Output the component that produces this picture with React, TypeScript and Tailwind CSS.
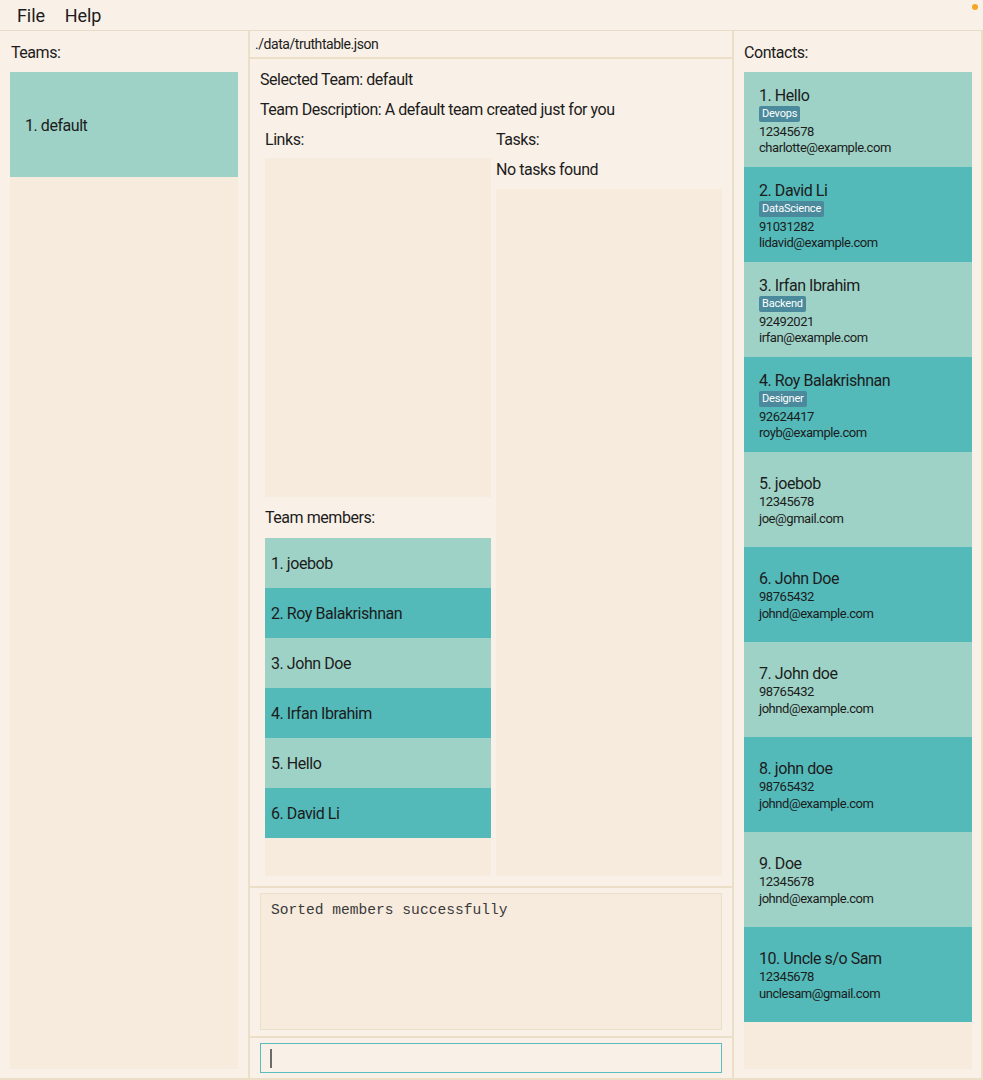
import React from "react";

const contacts = [
  { name: "1. Hello", tag: "Devops", phone: "12345678", email: "charlotte@example.com" },
  { name: "2. David Li", tag: "DataScience", phone: "91031282", email: "lidavid@example.com" },
  { name: "3. Irfan Ibrahim", tag: "Backend", phone: "92492021", email: "irfan@example.com" },
  { name: "4. Roy Balakrishnan", tag: "Designer", phone: "92624417", email: "royb@example.com" },
  { name: "5. joebob", tag: "", phone: "12345678", email: "joe@gmail.com" },
  { name: "6. John Doe", tag: "", phone: "98765432", email: "johnd@example.com" },
  { name: "7. John doe", tag: "", phone: "98765432", email: "johnd@example.com" },
  { name: "8. john doe", tag: "", phone: "98765432", email: "johnd@example.com" },
  { name: "9. Doe", tag: "", phone: "12345678", email: "johnd@example.com" },
  { name: "10. Uncle s/o Sam", tag: "", phone: "12345678", email: "unclesam@gmail.com" },
];

const members = [
  "1. joebob",
  "2. Roy Balakrishnan",
  "3. John Doe",
  "4. Irfan Ibrahim",
  "5. Hello",
  "6. David Li",
];

export default function App() {
  return (
    <div className="w-[983px] h-[1080px] bg-[#f9f0e7] flex flex-col text-[#1c1c1c] font-['Roboto',sans-serif] tracking-[-0.45px] overflow-hidden">
      {/* Menu bar */}
      <div className="relative h-[31px] shrink-0 border-b border-[#e8dcc6] flex items-center pl-[17px] gap-[20px] text-[18px] tracking-[-0.1px]">
        <span>File</span>
        <span>Help</span>
        <span className="absolute right-[5px] top-[4px] w-[6px] h-[6px] rounded-full bg-[#f5a623]" />
      </div>

      {/* Body */}
      <div className="flex-1 flex border-b-2 border-r-2 border-[#ebdfc8] min-h-0">
        {/* Left: Teams */}
        <div className="w-[248px] shrink-0 flex flex-col px-[10px] pb-[9px]">
          <div className="h-[41px] flex items-center pl-[1px] pt-[2px] text-[16px]">Teams:</div>
          <div className="flex-1 bg-[#f7ebde]">
            <div className="h-[105px] bg-[#9ed2c6] flex items-center pl-[15px] pt-[2px] text-[16px]">1. default</div>
          </div>
        </div>

        {/* Middle */}
        <div className="w-[486px] shrink-0 flex flex-col border-l-2 border-r-2 border-[#ebdfc8]">
          <div className="h-[28px] shrink-0 border-b-2 border-[#ebdfc8] flex items-center pl-[5px] text-[14px]">
            ./data/truthtable.json
          </div>

          <div className="flex-1 min-h-0 flex flex-col pt-[5px] pb-[10px] border-b-2 border-[#ebdfc8]">
            <div className="h-[30px] flex items-center pl-[10px] pt-[2px] text-[16px]">Selected Team: default</div>
            <div className="h-[30px] flex items-center pl-[10px] pt-[2px] text-[16px]">
              Team Description: A default team created just for you
            </div>
            <div className="flex-1 min-h-0 flex gap-[5px] pl-[15px] pr-[10px]">
              {/* Links + members */}
              <div className="w-[226px] flex flex-col">
                <div className="h-[34px] flex items-center pb-[2px] text-[16px]">Links:</div>
                <div className="h-[339px] bg-[#f7ebde]" />
                <div className="h-[41px] flex items-center pt-[1px] text-[16px]">Team members:</div>
                <div className="flex-1 bg-[#f7ebde]">
                  {members.map((m, i) => (
                    <div
                      key={m}
                      className={`h-[50px] flex items-center pl-[6px] pt-[2px] text-[16px] ${
                        i % 2 === 0 ? "bg-[#9ed2c6]" : "bg-[#53b9b9]"
                      }`}
                    >
                      {m}
                    </div>
                  ))}
                </div>
              </div>
              {/* Tasks */}
              <div className="w-[226px] flex flex-col">
                <div className="h-[30px] flex items-center pt-[2px] text-[16px]">Tasks:</div>
                <div className="h-[30px] flex items-center pt-[2px] text-[16px]">No tasks found</div>
                <div className="flex-1 mt-[5px] bg-[#f7ebde]" />
              </div>
            </div>
          </div>

          {/* Result display */}
          <div className="h-[150px] shrink-0 border-b-2 border-[#ebdfc8] px-[10px] pt-[5px] pb-[6px] flex">
            <div className="flex-1 bg-[#f7ebde] border border-[#ebdfc8] pl-[10px] pt-[6px] text-[14.6px] tracking-normal font-['Liberation_Mono',monospace] text-[#3a3a3a]">
              Sorted members successfully
            </div>
          </div>

          {/* Command box */}
          <div className="h-[40px] shrink-0 px-[10px] py-[5px] flex">
            <div className="flex-1 border border-[#5bbcbc] bg-[#f9f0e7] flex items-center pl-[9px]">
              <div className="w-[2px] h-[19px] bg-[#6b6b6b]" />
            </div>
          </div>
        </div>

        {/* Right: Contacts */}
        <div className="flex-1 flex flex-col pl-[10px] pr-[9px] pb-[9px]">
          <div className="h-[41px] flex items-center pt-[2px] text-[16px]">Contacts:</div>
          <div className="flex-1 bg-[#f7ebde]">
            {contacts.map((c, i) => (
              <div
                key={c.name}
                className={`h-[95px] flex flex-col justify-center pl-[15px] pt-[1px] ${
                  i % 2 === 0 ? "bg-[#9ed2c6]" : "bg-[#53b9b9]"
                }`}
              >
                <div className="text-[16px] leading-[19px]">{c.name}</div>
                {c.tag && (
                  <div className="flex my-[1px]">
                    <span className="bg-[#4a8a9c] text-white text-[11px] leading-[16px] px-[3px] rounded-[2px] tracking-[-0.2px]">
                      {c.tag}
                    </span>
                  </div>
                )}
                <div className="text-[13px] leading-[17px]">{c.phone}</div>
                <div className={`text-[13px] ${c.tag ? "leading-[15px]" : "leading-[17px]"}`}>{c.email}</div>
              </div>
            ))}
          </div>
        </div>
      </div>
    </div>
  );
}
